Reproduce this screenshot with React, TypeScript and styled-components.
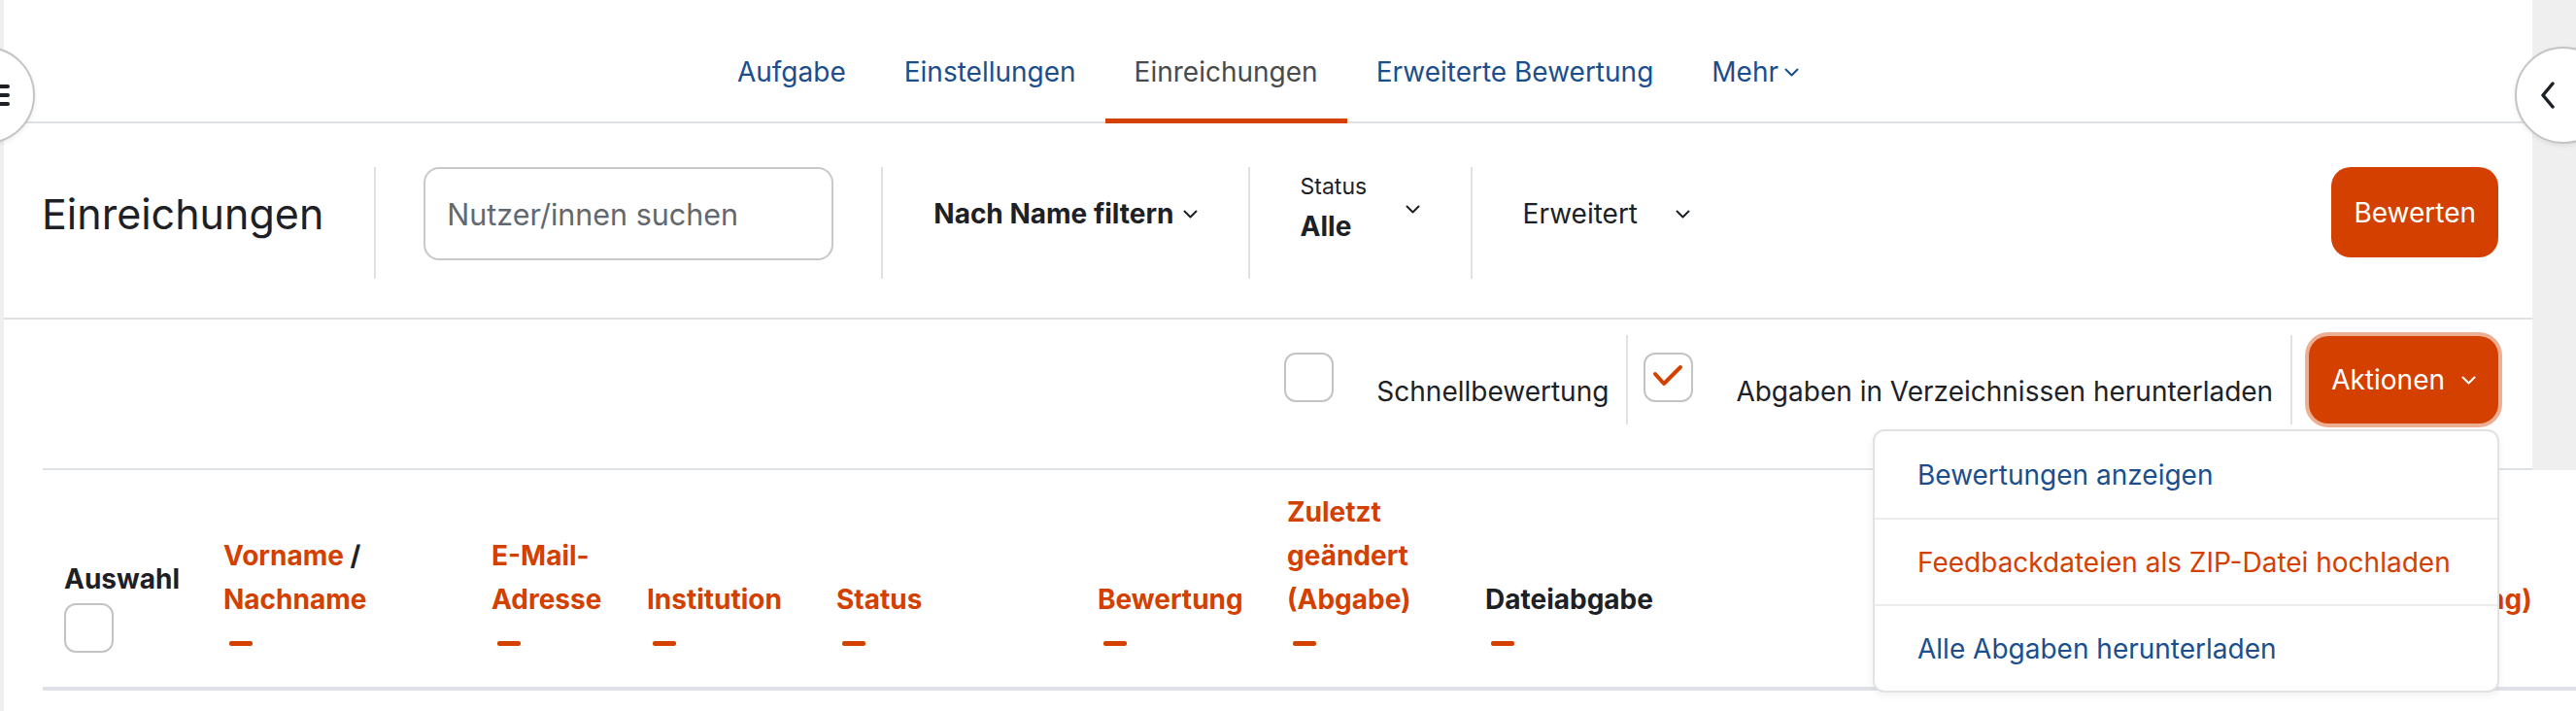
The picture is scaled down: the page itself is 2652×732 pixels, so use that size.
import React from 'react';
import styled, { createGlobalStyle } from 'styled-components';

const ORANGE = '#d34000';
const BLUE = '#1b4e8c';
const TEXT = '#1d2125';
const LINE = '#dee2e6';

const GlobalStyle = createGlobalStyle`
  html, body {
    margin: 0;
    padding: 0;
  }
  body {
    background: #efefef;
    overflow: hidden;
    font-family: Inter, Roboto, "Liberation Sans", Arial, sans-serif;
    font-size: 28px;
    color: ${TEXT};
  }
  * {
    box-sizing: border-box;
  }
`;

const Page = styled.div`
  position: relative;
  width: 2652px;
  height: 732px;
  padding-left: 4px;
  overflow: hidden;
`;

const Main = styled.main`
  width: 2603px;
  min-height: 732px;
  background: #fff;
`;

/* ---------- secondary navigation ---------- */

const NavBar = styled.nav`
  display: flex;
  justify-content: center;
  padding-top: 26px;
  border-bottom: 2px solid ${LINE};
`;

const NavLink = styled.a<{ $active?: boolean }>`
  display: flex;
  align-items: center;
  gap: 6px;
  padding: 0 30px;
  height: 101px;
  margin-bottom: -2px;
  line-height: 96px;
  border-bottom: 5px solid ${p => (p.$active ? ORANGE : 'transparent')};
  color: ${p => (p.$active ? '#4a4a4a' : BLUE)};
  text-decoration: none;
  cursor: pointer;
`;

const DrawerToggle = styled.button<{ $side: 'left' | 'right' }>`
  position: absolute;
  top: 48px;
  width: 100px;
  height: 100px;
  border-radius: 50%;
  border: 2px solid #c4c4c4;
  background: #fff;
  box-shadow: 0 2px 5px rgba(0, 0, 0, 0.08);
  display: flex;
  align-items: center;
  padding: 0;
  ${p =>
    p.$side === 'left'
      ? 'left: -64px; justify-content: flex-end; padding-right: 24px;'
      : 'left: 2589px; justify-content: flex-start; padding-left: 24px;'}
`;

/* ---------- filter bar ---------- */

const FilterBar = styled.div`
  display: flex;
  align-items: flex-start;
  padding: 45px 35px 40px 39px;
  border-bottom: 2px solid ${LINE};
`;

const PageTitle = styled.h2`
  margin: 0;
  padding-right: 52px;
  height: 96px;
  display: flex;
  align-items: center;
  font-size: 43px;
  font-weight: 400;
  color: ${TEXT};
`;

const FilterItem = styled.div<{ $pad?: number }>`
  display: flex;
  align-items: center;
  height: 115px;
  padding: 0 ${p => p.$pad ?? 52}px 19px;
  border-left: 2px solid ${LINE};
`;

const SearchInput = styled.input`
  width: 422px;
  height: 96px;
  padding: 0 22px;
  border: 2px solid #c9c9c9;
  border-radius: 16px;
  font: inherit;
  font-size: 30.5px;
  color: ${TEXT};
  outline: none;
  &::placeholder {
    color: #62686e;
  }
`;

const FilterToggle = styled.span<{ $gap?: number }>`
  display: flex;
  align-items: center;
  gap: ${p => p.$gap ?? 9}px;
  font-weight: ${p => (p.$gap ? 400 : 700)};
  cursor: pointer;
`;

const StatusBox = styled.div`
  display: flex;
  align-items: center;
  justify-content: space-between;
  width: 123px;
  margin-bottom: 9px;
`;

const StatusLabel = styled.div`
  font-size: 23px;
  line-height: 28px;
  margin-bottom: 7px;
`;

const StatusValue = styled.div`
  font-weight: 700;
  line-height: 40px;
`;

const PrimaryButton = styled.button<{ $focused?: boolean }>`
  display: inline-flex;
  align-items: center;
  gap: 17px;
  height: ${p => (p.$focused ? 90 : 93)}px;
  padding: 0 23px;
  border: none;
  border-radius: 20px;
  background: ${ORANGE};
  color: #fff;
  font: inherit;
  cursor: pointer;
  box-shadow: ${p => (p.$focused ? '0 0 0 4px rgba(211, 64, 0, 0.42)' : 'none')};
`;

const PushRight = styled.div`
  margin-left: auto;
`;

/* ---------- action bar ---------- */

const ActionBar = styled.div`
  display: flex;
  justify-content: flex-end;
  align-items: flex-start;
  gap: 18px;
  margin-left: 40px;
  padding: 16px 35px 45px 0;
  border-bottom: 2px solid ${LINE};
`;

const ActionGroup = styled.div<{ $divided?: boolean }>`
  position: relative;
  display: flex;
  align-items: flex-start;
  height: 92px;
  padding-left: ${p => (p.$divided ? 16 : 0)}px;
  border-left: ${p => (p.$divided ? `2px solid ${LINE}` : 'none')};
`;

const CheckBox = styled.span<{ $top?: number }>`
  display: inline-flex;
  align-items: center;
  justify-content: center;
  flex-shrink: 0;
  width: 51px;
  height: 51px;
  margin-top: ${p => p.$top ?? 0}px;
  border: 2px solid #c4c4c4;
  border-radius: 12px;
  background: #fff;
`;

const CheckLabel = styled.label`
  margin: 38px 0 0 44px;
  line-height: 40px;
  white-space: nowrap;
`;

const ButtonWrap = styled.div`
  position: relative;
  padding-left: 17px;
  padding-top: 1px;
  border-left: 2px solid ${LINE};
  height: 92px;
`;

const Menu = styled.ul`
  position: absolute;
  z-index: 5;
  top: 97px;
  right: -1px;
  width: 645px;
  margin: 0;
  padding: 0;
  list-style: none;
  background: #fff;
  border: 2px solid #e2e2e2;
  border-radius: 12px;
  box-shadow: 0 3px 8px rgba(0, 0, 0, 0.06);
  overflow: hidden;
`;

const MenuItem = styled.li<{ $active?: boolean }>`
  display: flex;
  align-items: center;
  height: 89px;
  padding-left: 44px;
  color: ${p => (p.$active ? ORANGE : BLUE)};
  white-space: nowrap;
  cursor: pointer;
  & + & {
    border-top: 2px solid #ececec;
  }
`;

/* ---------- grading table ---------- */

const TableWrap = styled.div`
  margin-left: 40px;
  width: 2620px;
  height: 248px;
  background: #fff;
`;

const Table = styled.table`
  table-layout: fixed;
  width: 2620px;
  border-collapse: collapse;
`;

const Th = styled.th<{ $w: number }>`
  width: ${p => p.$w}px;
  padding: 21px 22px 22px;
  text-align: left;
  vertical-align: bottom;
  font-weight: 700;
  line-height: 45px;
  color: ${TEXT};
  border-bottom: 4px solid ${LINE};
`;

const SortLink = styled.a`
  color: ${ORANGE};
  text-decoration: none;
  cursor: pointer;
`;

const ColToggle = styled.div`
  display: flex;
  align-items: center;
  height: 45px;
  &::before {
    content: '';
    display: block;
    width: 24px;
    height: 5px;
    margin-left: 6px;
    border-radius: 2px;
    background: ${ORANGE};
  }
`;

const SelectAll = styled(CheckBox)`
  display: flex;
  margin: 2px 0 13px;
`;

/* ---------- icons ---------- */

const Chevron = ({ color = TEXT }: { color?: string }) => (
  <svg width="15" height="9" viewBox="0 0 15 9" fill="none">
    <path d="M1.5 1.5l6 6 6-6" stroke={color} strokeWidth="2" strokeLinecap="round" strokeLinejoin="round" />
  </svg>
);

const Tick = () => (
  <svg width="47" height="47" viewBox="0 0 47 47" fill="none">
    <path d="M10 20l9 10 17-17" stroke={ORANGE} strokeWidth="4" strokeLinecap="round" strokeLinejoin="round" />
  </svg>
);

const Bars = () => (
  <svg width="34" height="24" viewBox="0 0 34 24">
    <rect x="0" y="1" width="34" height="4" rx="2" fill="#1d2125" />
    <rect x="0" y="10" width="34" height="4" rx="2" fill="#1d2125" />
    <rect x="0" y="19" width="34" height="4" rx="2" fill="#1d2125" />
  </svg>
);

const ChevronLeft = () => (
  <svg width="16" height="28" viewBox="0 0 16 28" fill="none">
    <path d="M13 2L3 14l10 12" stroke="#1d2125" strokeWidth="3.5" strokeLinecap="round" strokeLinejoin="round" />
  </svg>
);

const tabs = ['Aufgabe', 'Einstellungen', 'Einreichungen', 'Erweiterte Bewertung'];

export default function App() {
  return (
    <Page>
      <GlobalStyle />
      <Main>
        <NavBar>
          {tabs.map(t => (
            <NavLink key={t} $active={t === 'Einreichungen'}>
              {t}
            </NavLink>
          ))}
          <NavLink>
            Mehr <Chevron color={BLUE} />
          </NavLink>
        </NavBar>

        <FilterBar>
          <PageTitle>Einreichungen</PageTitle>
          <FilterItem $pad={49}>
            <SearchInput placeholder="Nutzer/innen suchen" />
          </FilterItem>
          <FilterItem>
            <FilterToggle>
              Nach Name filtern <Chevron />
            </FilterToggle>
          </FilterItem>
          <FilterItem>
            <StatusBox>
              <div>
                <StatusLabel>Status</StatusLabel>
                <StatusValue>Alle</StatusValue>
              </div>
              <Chevron />
            </StatusBox>
          </FilterItem>
          <FilterItem>
            <FilterToggle $gap={39}>
              Erweitert <Chevron />
            </FilterToggle>
          </FilterItem>
          <PushRight>
            <PrimaryButton>Bewerten</PrimaryButton>
          </PushRight>
        </FilterBar>

        <ActionBar>
          <ActionGroup>
            <CheckBox $top={18} />
            <CheckLabel>Schnellbewertung</CheckLabel>
          </ActionGroup>
          <ActionGroup $divided>
            <CheckBox $top={18}>
              <Tick />
            </CheckBox>
            <CheckLabel>Abgaben in Verzeichnissen herunterladen</CheckLabel>
          </ActionGroup>
          <ButtonWrap>
            <PrimaryButton $focused>
              Aktionen <Chevron color="#fff" />
            </PrimaryButton>
            <Menu>
              <MenuItem>Bewertungen anzeigen</MenuItem>
              <MenuItem $active>Feedbackdateien als ZIP-Datei hochladen</MenuItem>
              <MenuItem>Alle Abgaben herunterladen</MenuItem>
            </Menu>
          </ButtonWrap>
        </ActionBar>

        <TableWrap>
          <Table>
            <thead>
              <tr>
                <Th $w={164}>
                  <div>Auswahl</div>
                  <SelectAll />
                </Th>
                <Th $w={276}>
                  <SortLink>Vorname</SortLink> / <SortLink>Nachname</SortLink>
                  <ColToggle />
                </Th>
                <Th $w={160}>
                  <SortLink>E-Mail-Adresse</SortLink>
                  <ColToggle />
                </Th>
                <Th $w={195}>
                  <SortLink>Institution</SortLink>
                  <ColToggle />
                </Th>
                <Th $w={269}>
                  <SortLink>Status</SortLink>
                  <ColToggle />
                </Th>
                <Th $w={195}>
                  <SortLink>Bewertung</SortLink>
                  <ColToggle />
                </Th>
                <Th $w={204}>
                  <SortLink>Zuletzt geändert (Abgabe)</SortLink>
                  <ColToggle />
                </Th>
                <Th $w={907}>
                  Dateiabgabe
                  <ColToggle />
                </Th>
                <Th $w={250}>
                  <SortLink>Zuletzt geändert (Bewertung)</SortLink>
                  <ColToggle />
                </Th>
              </tr>
            </thead>
          </Table>
        </TableWrap>
      </Main>

      <DrawerToggle $side="left" aria-label="Kursindex">
        <Bars />
      </DrawerToggle>
      <DrawerToggle $side="right" aria-label="Blockleiste">
        <ChevronLeft />
      </DrawerToggle>
    </Page>
  );
}
